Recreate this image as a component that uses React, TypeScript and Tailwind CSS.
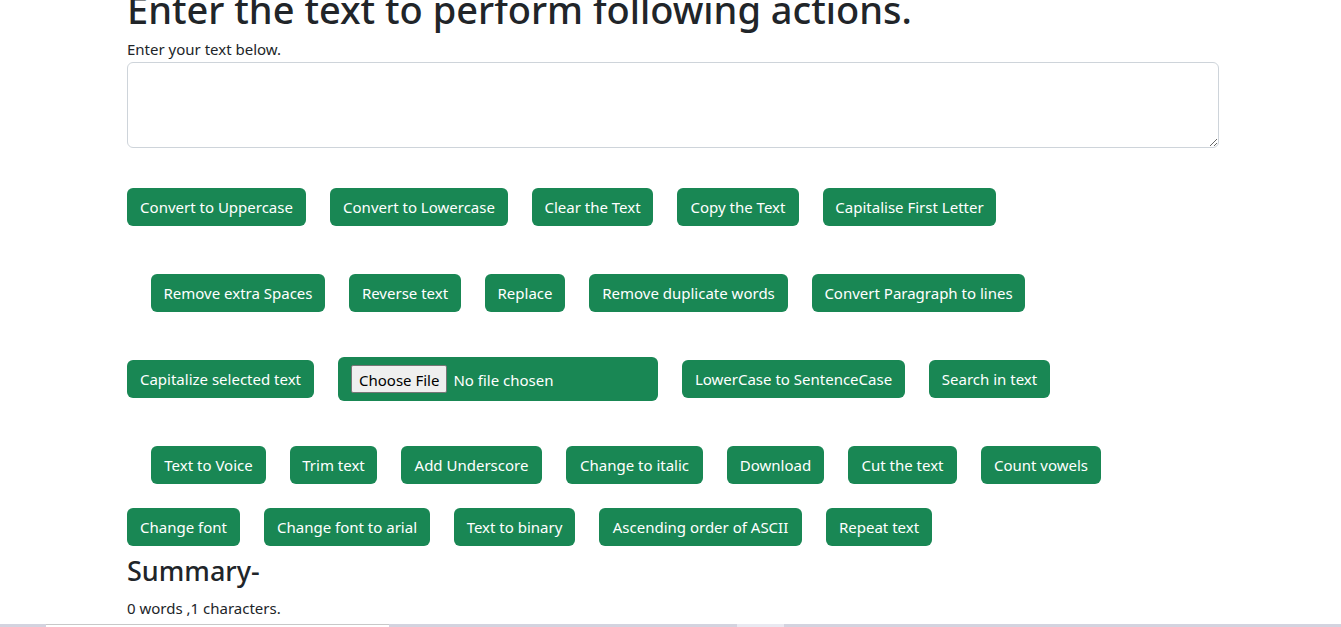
import React from "react";

const FONT = "font-['Segoe_UI','Noto_Sans',sans-serif]";

interface Action {
  label: string;
  w: number;
}

const rows: { indent: boolean; items: Action[] }[] = [
  {
    indent: false,
    items: [
      { label: "Convert to Uppercase", w: 179 },
      { label: "Convert to Lowercase", w: 178 },
      { label: "Clear the Text", w: 121 },
      { label: "Copy the Text", w: 122 },
      { label: "Capitalise First Letter", w: 173 },
    ],
  },
  {
    indent: true,
    items: [
      { label: "Remove extra Spaces", w: 174 },
      { label: "Reverse text", w: 112 },
      { label: "Replace", w: 80 },
      { label: "Remove duplicate words", w: 199 },
      { label: "Convert Paragraph to lines", w: 213 },
    ],
  },
];

const row4: Action[] = [
  { label: "Text to Voice", w: 115 },
  { label: "Trim text", w: 87 },
  { label: "Add Underscore", w: 141 },
  { label: "Change to italic", w: 137 },
  { label: "Download", w: 97 },
  { label: "Cut the text", w: 109 },
  { label: "Count vowels", w: 120 },
];

const row5: Action[] = [
  { label: "Change font", w: 113 },
  { label: "Change font to arial", w: 166 },
  { label: "Text to binary", w: 121 },
  { label: "Ascending order of ASCII", w: 203 },
  { label: "Repeat text", w: 106 },
];

function Btn({ a }: { a: Action }) {
  return (
    <button
      className="h-[38px] shrink-0 rounded-md bg-[#198754] text-[15px] leading-6 text-white whitespace-nowrap"
      style={{ width: a.w }}
    >
      {a.label}
    </button>
  );
}

export default function App() {
  return (
    <div className={`${FONT} h-[627px] overflow-hidden bg-white text-[#212529] flex flex-col`}>
      <div className="flex-1 pl-[127px] w-[1219px]">
        <h1 className="mt-[-15px] text-[38px] font-medium leading-[48px] whitespace-nowrap">
          Enter the text to perform following actions.
        </h1>
        <label className="block mt-[5px] text-[15px] leading-[22px]">Enter your text below.</label>
        <textarea className="block mt-[2px] w-[1092px] h-[86px] border border-[#ced4da] rounded-md bg-white" />

        {rows.map((r, i) => (
          <div key={i} className={`flex gap-6 ${i === 0 ? "mt-10" : "mt-12"} ${r.indent ? "pl-6" : ""}`}>
            {r.items.map((a) => (
              <Btn key={a.label} a={a} />
            ))}
          </div>
        ))}

        <div className="flex items-center gap-6 mt-[45px]">
          <Btn a={{ label: "Capitalize selected text", w: 187 }} />
          <input
            type="file"
            className="w-[320px] h-[44px] rounded-md bg-[#198754] text-white text-[15px] leading-[28px] px-[13px] pt-[8px] file:mr-[6px] file:h-[28px] file:px-[7px] file:bg-[#efefef] file:text-black file:border file:border-[#767676] file:rounded-[2px]"
          />
          <Btn a={{ label: "LowerCase to SentenceCase", w: 223 }} />
          <Btn a={{ label: "Search in text", w: 121 }} />
        </div>

        <div className="flex gap-6 mt-[45px] pl-6">
          {row4.map((a) => (
            <Btn key={a.label} a={a} />
          ))}
        </div>

        <div className="flex gap-6 mt-6">
          {row5.map((a) => (
            <Btn key={a.label} a={a} />
          ))}
        </div>

        <h3 className="mt-[8px] text-[27px] font-medium leading-[34px]">Summary-</h3>
        <p className="mt-[10px] text-[15px] leading-[20px]">0 words ,1 characters.</p>
      </div>

      <div className="h-[3px] shrink-0 bg-[#d3d3df] flex">
        <div className="ml-[46px] w-[343px] bg-white border-t border-[#c8c8c8]" />
        <div className="ml-[348px] w-[47px] bg-[#e9e9f1]" />
      </div>
    </div>
  );
}
